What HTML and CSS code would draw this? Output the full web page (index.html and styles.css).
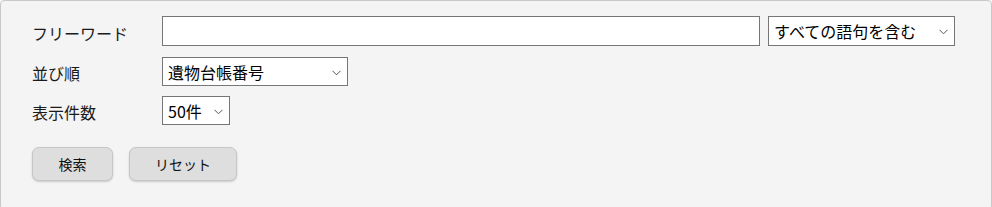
FILE: index.html
```html
<!DOCTYPE html>
<html lang="ja">
<head>
<meta charset="utf-8">
<link rel="stylesheet" href="styles.css">
</head>
<body>
<form class="panel">
  <div class="row">
    <label class="lbl">フリーワード</label>
    <input class="text" type="text">
    <span class="sel sel-mode">
      <select><option>すべての語句を含む</option></select>
      <svg class="chev" width="9" height="6" viewBox="0 0 9 6"><path d="M0.5 0.8 L4.5 4.8 L8.5 0.8" fill="none" stroke="#555" stroke-width="1"/></svg>
    </span>
  </div>
  <div class="row">
    <label class="lbl">並び順</label>
    <span class="sel sel-order">
      <select><option>遺物台帳番号</option></select>
      <svg class="chev" width="9" height="6" viewBox="0 0 9 6"><path d="M0.5 0.8 L4.5 4.8 L8.5 0.8" fill="none" stroke="#555" stroke-width="1"/></svg>
    </span>
  </div>
  <div class="row">
    <label class="lbl">表示件数</label>
    <span class="sel sel-count">
      <select><option>50件</option></select>
      <svg class="chev" width="9" height="6" viewBox="0 0 9 6"><path d="M0.5 0.8 L4.5 4.8 L8.5 0.8" fill="none" stroke="#555" stroke-width="1"/></svg>
    </span>
  </div>
  <div class="buttons">
    <button type="button" class="btn btn-search">検索</button>
    <button type="button" class="btn btn-reset">リセット</button>
  </div>
</form>
</body>
</html>
```
FILE: styles.css
```css
html, body {
  margin: 0;
  padding: 0;
  background: #ffffff;
}
body {
  font-family: "Noto Sans CJK JP", "Noto Sans", sans-serif;
  color: #000;
}
.panel {
  box-sizing: border-box;
  width: 992px;
  height: 210px;
  margin: 0;
  background: #f4f4f4;
  border: 1px solid #c8c8c8;
  border-radius: 4px;
  padding: 15px 0 0 31px;
}
.row {
  display: flex;
  align-items: center;
  height: 30px;
}
.row:nth-child(2) {
  height: 29px;
  margin-top: 11px;
}
.row:nth-child(3) {
  height: 29px;
  margin-top: 10px;
}
.lbl {
  width: 130px;
  font-size: 16px;
  line-height: 20px;
  padding-top: 3px;
  color: #1a1a1a;
}
.text {
  box-sizing: border-box;
  width: 598px;
  height: 30px;
  margin: 0;
  border: 1px solid #767676;
  background: #fff;
  padding: 0 6px;
  font-size: 15px;
  outline: none;
}
.sel {
  position: relative;
  display: inline-block;
}
.sel-mode {
  margin-left: 8px;
}
.sel select {
  appearance: none;
  -webkit-appearance: none;
  box-sizing: border-box;
  display: block;
  height: 30px;
  margin: 0;
  border: 1px solid #767676;
  border-radius: 0;
  background: #fff;
  font-family: "Noto Sans CJK JP", "Noto Sans", sans-serif;
  font-size: 16px;
  color: #000;
  padding: 0 20px 0 5px;
  outline: none;
}
.sel-mode select { width: 187px; }
.sel-order select { width: 186px; height: 29px; }
.sel-count select { width: 68px; height: 29px; }
.chev {
  position: absolute;
  right: 7px;
  top: 50%;
  margin-top: -2px;
  pointer-events: none;
}
.buttons {
  display: flex;
  gap: 16px;
  margin-top: 22px;
}
.btn {
  box-sizing: border-box;
  height: 34px;
  margin: 0;
  border: 1px solid #c6c6c6;
  border-radius: 7px;
  background: #dedede;
  box-shadow: 0 1px 2px rgba(0, 0, 0, 0.18);
  font-family: "Noto Sans CJK JP", "Noto Sans", sans-serif;
  font-size: 14px;
  color: #111;
  padding: 0;
}
.btn-search { width: 81px; }
.btn-reset { width: 108px; }
```
